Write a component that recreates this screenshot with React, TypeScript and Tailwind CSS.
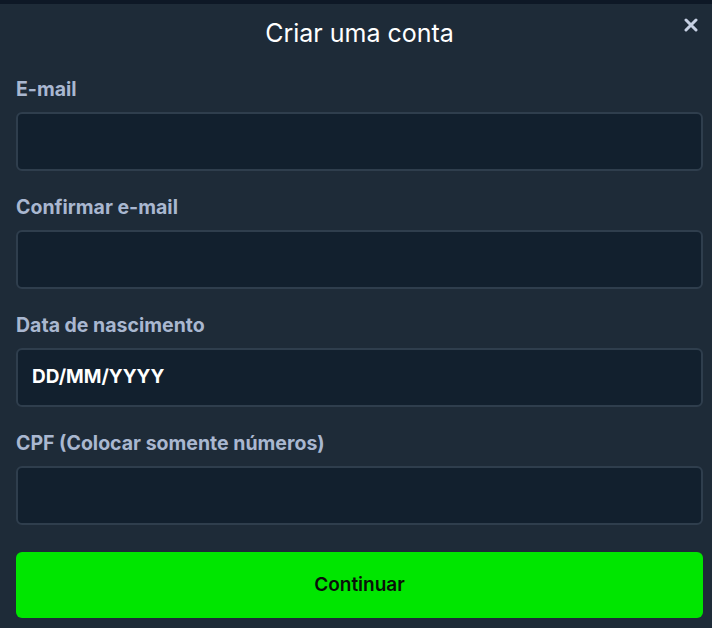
import React from "react";

const fields = [
  { label: "E-mail", value: "" },
  { label: "Confirmar e-mail", value: "" },
  { label: "Data de nascimento", value: "DD/MM/YYYY" },
  { label: "CPF (Colocar somente números)", value: "" },
];

export default function App() {
  return (
    <div className="w-[712px] bg-white" style={{ fontFamily: "Inter, 'Noto Sans', sans-serif" }}>
      <div className="h-[4px] bg-[#0e1826]" />
      <div className="bg-[#1e2b38] pb-[10px] pl-4 pr-[9px]">
        <div className="relative flex h-[60px] items-center justify-center">
          <h1 className="text-[25px] font-normal text-white">Criar uma conta</h1>
          <button className="absolute right-[3px] top-[12px] flex h-[18px] w-[18px] items-center justify-center text-[#c6d0e3]">
            <svg width="14" height="14" viewBox="0 0 14 14" fill="none" stroke="currentColor" strokeWidth="3" strokeLinecap="round">
              <path d="M2 2 L12 12 M12 2 L2 12" />
            </svg>
          </button>
        </div>
        <div className="mt-[13px] flex flex-col gap-[24px]">
          {fields.map((f) => (
            <div key={f.label} className="flex flex-col">
              <label className="mb-[11px] h-[24px] text-[19.5px] font-bold leading-[24px] text-[#a9b7d0]">{f.label}</label>
              <div className="flex h-[59px] items-center rounded-[6px] border-2 border-[#2f3e4d] bg-[#12202e] px-[14px]">
                <span className="text-[19px] font-bold text-white">{f.value}</span>
              </div>
            </div>
          ))}
        </div>
        <button className="mt-[27px] flex h-[66px] w-full items-center justify-center rounded-[6px] bg-[#00e600] text-[19px] font-semibold text-[#0a0f0a]">
          Continuar
        </button>
      </div>
    </div>
  );
}
